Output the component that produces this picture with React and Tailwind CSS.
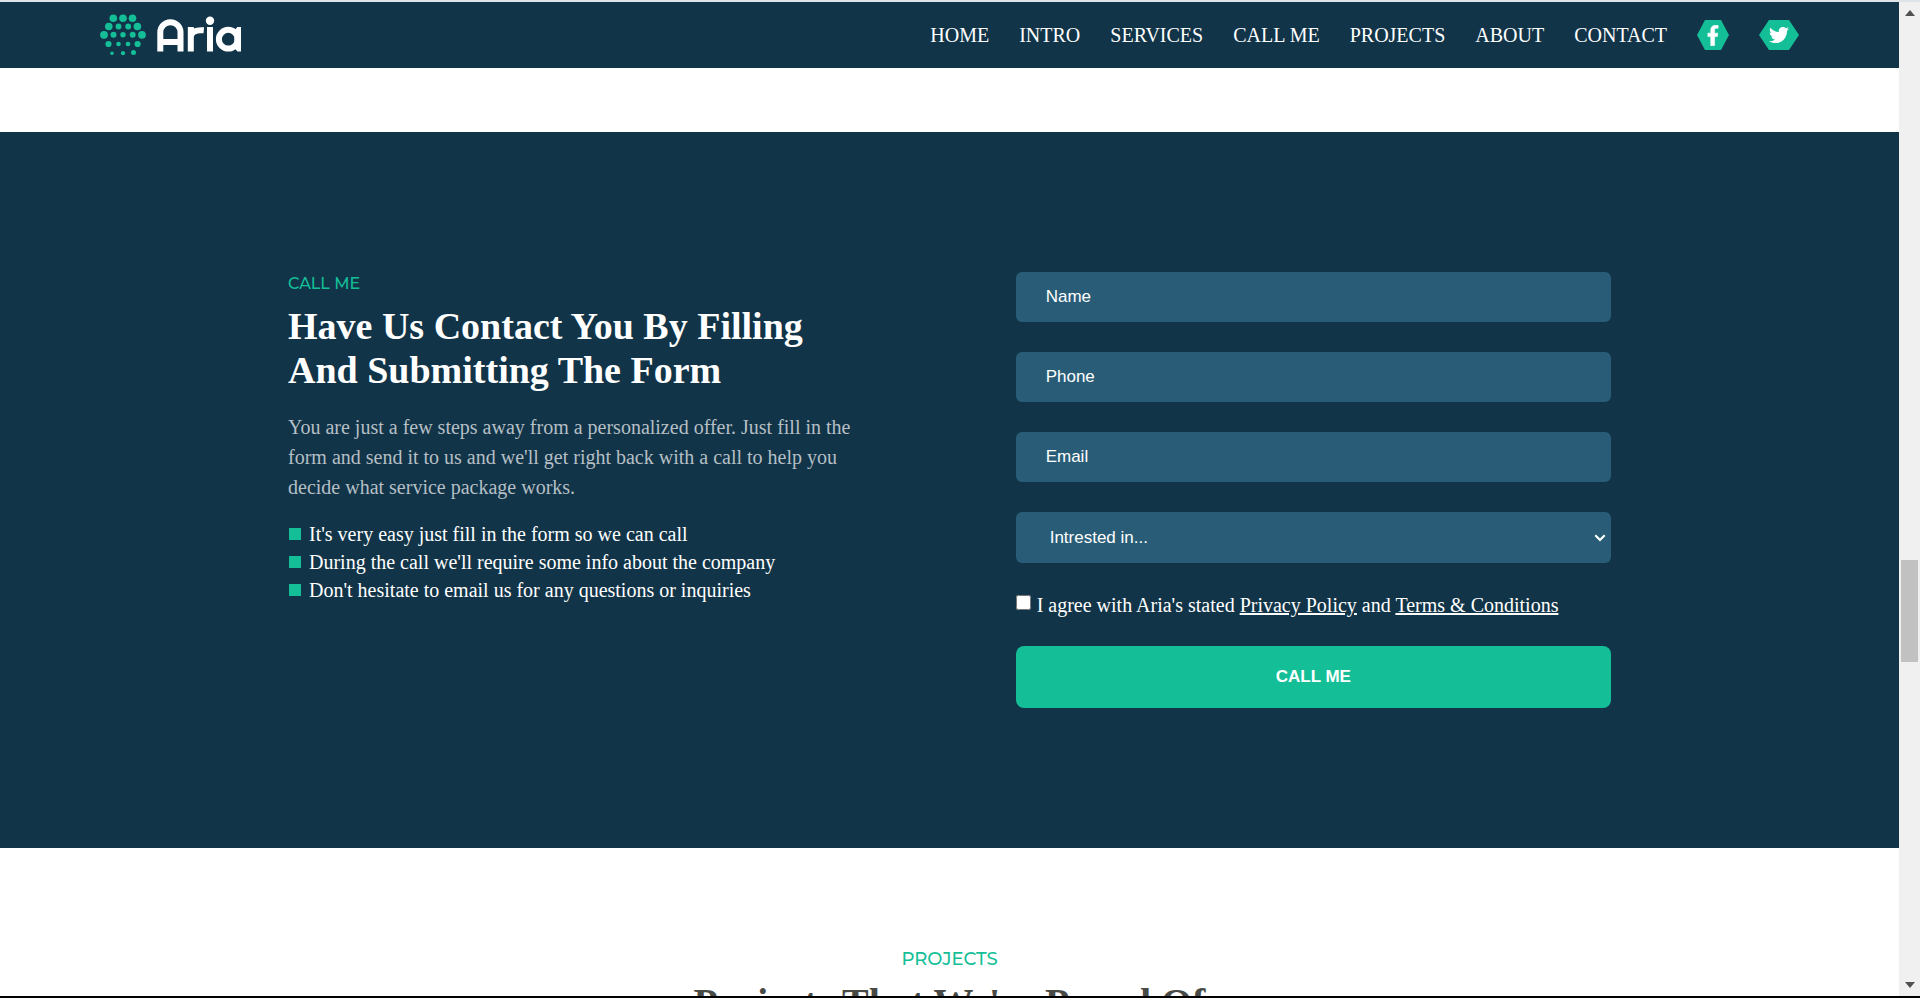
import { FaTwitter } from "react-icons/fa";

const links = ["HOME", "INTRO", "SERVICES", "CALL ME", "PROJECTS", "ABOUT", "CONTACT"];

const dots = [
  [113.3, 18.3, 3.8], [123, 18.3, 3.8], [132.5, 18.3, 3.8],
  [108.8, 26.5, 3.8], [118.5, 26.5, 2.9], [128.2, 26.5, 2.9], [137.4, 26.5, 3.8],
  [104, 34.8, 3.9], [113.5, 34.8, 3], [123, 34.8, 2.7], [132.7, 34.8, 3], [142, 34.8, 3.9],
  [108.5, 44, 3.1], [118.5, 44, 2.3], [128, 44, 2.3], [137.6, 44, 3.1],
  [112, 53.2, 1.8], [123, 53.2, 2.1], [133.5, 52.6, 2.5],
];

function Logo() {
  return (
    <svg width="142" height="42" viewBox="100 14 142 42" role="img" aria-label="Aria">
      <g fill="#14bf98">
        {dots.map(([x, y, r]) => (
          <circle key={`${x}-${y}`} cx={x} cy={y} r={r} />
        ))}
      </g>
      <g fill="none" stroke="#fff" strokeWidth="6">
        <path d="M160.300 51.500V32.300a10.100 10.100 0 0 1 20.200 0V51.500M160.300 42h20.200" />
        <path d="M190.800 51.500V27M190.800 37c0-5 5-7.500 13-6.700" />
        <path d="M210 27V51.500" />
        <circle cx="228.300" cy="39.200" r="9.400" />
      </g>
      <path d="M241 27v24.500h-3.600l-3-3.500V30.500l3-3.500Z" fill="#fff" />
      <circle cx="210" cy="20.700" r="4.200" fill="#fff" />
    </svg>
  );
}

function FacebookIcon() {
  return (
    <svg height="21" width="12" viewBox="-14 0 292 512" fill="#fff" stroke="#fff" strokeWidth="14" aria-hidden="true">
      <path d="M76.700 505V283H7v-84h69.700v-78.700C76.700 46 124.300 7 193.800 7c33.300 0 55 2 63 3.300V80h-41c-37.800 0-45.100 18-45.100 44.300V199H249l-10 84h-68.300v222Z" />
    </svg>
  );
}

const field =
  "block w-full rounded-md border-0 bg-[#295d77] font-['Liberation_Sans',Arial,sans-serif] text-[17px] text-white placeholder:text-white placeholder:opacity-100 outline-none";

function Header() {
  return (
    <header className="flex h-[66px] items-center justify-between bg-[#113448] px-[100px]">
      <a href="#home"><Logo /></a>
      <nav className="flex items-center gap-[30px] text-xl text-white">
        {links.map((l) => (
          <a key={l} href={`#${l.toLowerCase().replace(" ", "-")}`}>{l}</a>
        ))}
        <a href="#facebook" aria-label="Facebook" className="flex h-[30px] w-8 items-center justify-center bg-[#14bf98] [clip-path:polygon(25%_0,75%_0,100%_50%,75%_100%,25%_100%,0_50%)]">
          <FacebookIcon />
        </a>
        <a href="#twitter" aria-label="Twitter" className="flex h-[30px] w-10 items-center justify-center bg-[#14bf98] [clip-path:polygon(25%_0,75%_0,100%_50%,75%_100%,25%_100%,0_50%)]">
          <FaTwitter size={20} />
        </a>
      </nav>
    </header>
  );
}

function CallForm() {
  return (
    <form className="w-[45%]" onSubmit={(e) => e.preventDefault()}>
      <div className="flex flex-col gap-[30px]">
        <input aria-label="Name" placeholder="Name" className={`${field} h-[50px] px-[30px]`} />
        <input aria-label="Phone" type="tel" placeholder="Phone" className={`${field} h-[50px] px-[30px]`} />
        <input aria-label="Email" type="email" placeholder="Email" className={`${field} h-[50px] px-[30px]`} />
        <div className="relative">
          <select aria-label="Interest" className={`${field} h-[51px] appearance-none px-[34px]`}>
            <option>Intrested in...</option>
          </select>
          <svg className="pointer-events-none absolute top-[22px] right-[5px]" width="12" height="8" viewBox="0 0 12 8" aria-hidden="true">
            <path d="M1.300 1.300L6 6L10.700 1.300" fill="none" stroke="#fff" strokeWidth="2.200" />
          </svg>
        </div>
      </div>
      <div className="mt-[30px] flex items-start gap-[6px] text-xl leading-6 text-white">
        <input id="agree" type="checkbox" className="mt-[2px] size-[15px]" />
        <label htmlFor="agree">
          I agree with Aria's stated <a href="#privacy" className="underline">Privacy Policy</a> and{" "}
          <a href="#terms" className="underline">Terms &amp; Conditions</a>
        </label>
      </div>
      <button className="mt-[29px] block h-[62px] w-full rounded-lg bg-[#14bf98] font-['Liberation_Sans',Arial,sans-serif] text-[17px] font-bold text-white">
        CALL ME
      </button>
    </form>
  );
}

export default function App() {
  return (
    <div className="flex h-screen flex-col overflow-hidden border-t-2 border-b-2 border-t-[#dde3e6] border-b-black bg-white font-['Liberation_Serif','Times_New_Roman',serif]">
      <div className="flex min-h-0 flex-1">
        <main className="min-w-0 flex-1 overflow-hidden">
          <Header />
          <section className="mt-16 bg-[#113448] py-[140px]">
            <div className="mx-auto flex w-full max-w-[1323px] justify-between">
              <div className="w-[44%]">
                <p className="font-[Montserrat,Inter,sans-serif] text-base leading-6 font-medium text-[#14bf98]">CALL ME</p>
                <h2 className="mt-2 text-[38px] leading-11 font-bold text-white">
                  Have Us Contact You By Filling And Submitting The Form
                </h2>
                <p className="mt-5 text-xl leading-[30px] text-[#b5bfc5]">
                  You are just a few steps away from a personalized offer. Just fill in the form and send it to us and we'll get right back with a call to help you decide what service package works.
                </p>
                <ul className="mt-[18px] text-xl leading-7 text-white">
                  {[
                    "It's very easy just fill in the form so we can call",
                    "During the call we'll require some info about the company",
                    "Don't hesitate to email us for any questions or inquiries",
                  ].map((t) => (
                    <li key={t} className="flex items-center gap-2">
                      <span className="ml-px size-3 bg-[#14bf98]" />
                      {t}
                    </li>
                  ))}
                </ul>
              </div>
              <CallForm />
            </div>
          </section>
          <section className="pt-[99px] text-center">
            <p className="font-[Montserrat,Inter,sans-serif] text-lg leading-6 font-medium text-[#14bf98]">PROJECTS</p>
            <h2 className="mt-2 text-[40px] leading-12 font-bold text-[#484a46]">Projects That We're Proud Of</h2>
          </section>
        </main>
        <div aria-hidden="true" className="flex w-[21px] shrink-0 flex-col items-center bg-[#f0f0f0] pt-2 pb-2">
          <svg width="10" height="6"><path d="M0 6L5 0L10 6Z" fill="#505050" /></svg>
          <div className="mt-[544px] h-[102px] w-[17px] bg-[#c1c1c1]" />
          <svg className="mt-auto" width="10" height="6"><path d="M0 0L5 6L10 0Z" fill="#505050" /></svg>
        </div>
      </div>
    </div>
  );
}
